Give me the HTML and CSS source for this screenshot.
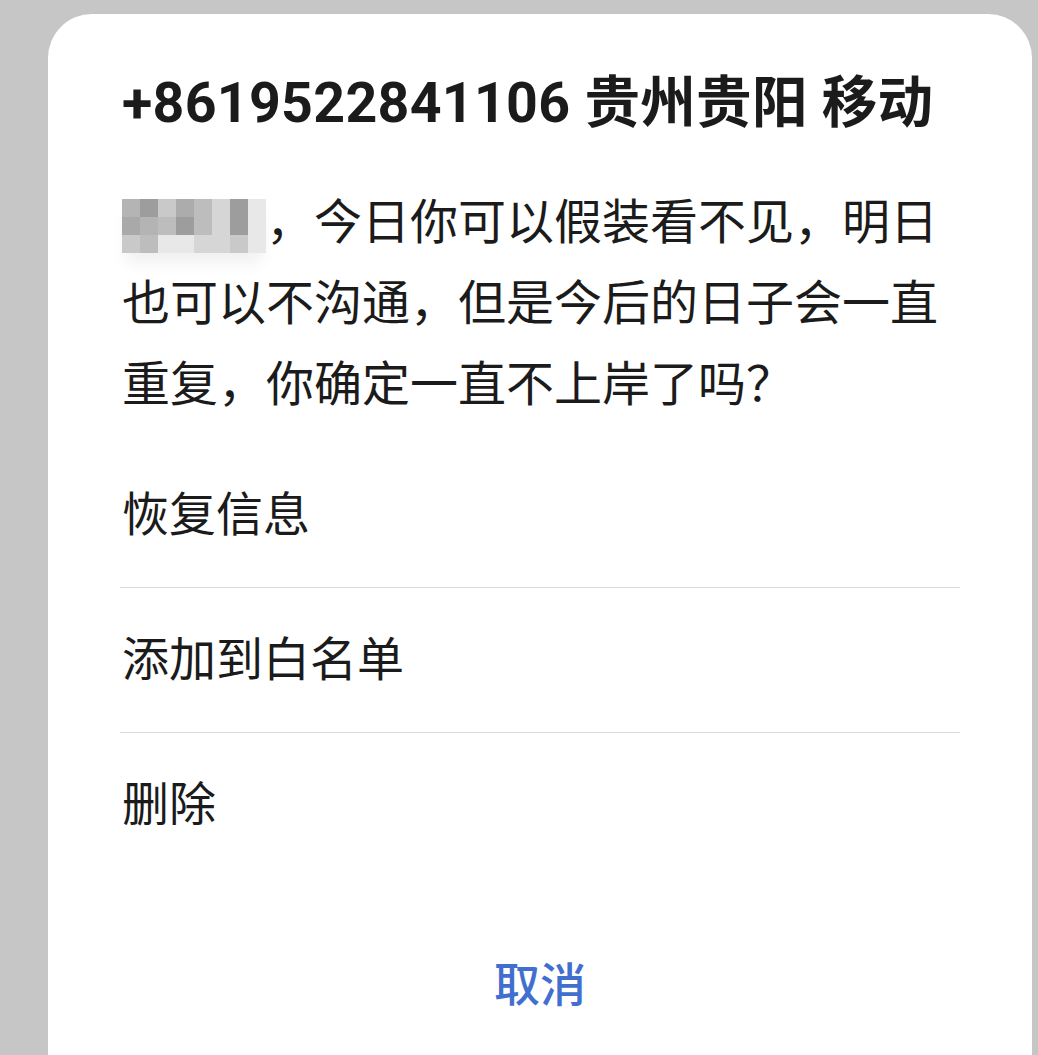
FILE: index.html
```html
<!DOCTYPE HTML>
<html>
    <head>
        <meta name="viewport" content="width=device-width, initial-scale=1.0">
        <title>拦截信息</title>
        <link rel="stylesheet" href="styles.css">
    </head>
    <body>
        <div class="sheet">
            <h1 class="sender">+8619522841106 贵州贵阳 移动</h1>
            <p class="message"><span class="mosaic">
                <i class="c1"></i><i class="c2"></i><i class="c3"></i><i class="c4"></i><i class="c5"></i><i class="c6"></i><i class="c2"></i><i class="c8"></i>
                <i class="c9"></i><i class="c1"></i><i class="c5"></i><i class="c2"></i><i class="c5"></i><i class="c6"></i><i class="c2"></i><i class="c8"></i>
                <i class="c3"></i><i class="c5"></i><i class="c8"></i><i class="c8"></i><i class="c6"></i><i class="c6"></i><i class="c3"></i><i class="c8"></i>
            </span>，今日你可以假装看不见，明日也可以不沟通，但是今后的日子会一直重复，你确定一直不上岸了吗？</p>
            <ul class="actions">
                <li>恢复信息</li>
                <li>添加到白名单</li>
                <li>删除</li>
            </ul>
            <button class="cancel">取消</button>
        </div>
    </body>
</html>
```

FILE: styles.css
```css
html, body{
    margin: 0;
    height: 100%;
}
body{
    background-color: #c6c6c6;
    font-family: Roboto, "Noto Sans CJK SC", sans-serif;
    color: #1b1b1b;
    overflow: hidden;
    padding: 14px 6px 0 48px;
    box-sizing: border-box;
}
.sheet{
    background: #fff;
    border-radius: 44px;
    height: 1100px;
    padding: 58px 72px 0 72px;
    box-sizing: border-box;
}
.sender{
    margin: 0 0 0 2px;
    font-size: 55.5px;
    line-height: 64px;
    font-weight: 700;
    letter-spacing: 0.3px;
    white-space: nowrap;
}
.message{
    margin: 46px 0 0 2px;
    font-size: 48px;
    line-height: 81px;
}
.mosaic{
    display: inline-grid;
    grid-template-columns: repeat(8, 18px);
    grid-auto-rows: 18px;
    width: 144px;
    vertical-align: middle;
    box-shadow: 0 14px 16px -4px #f0f0f0;
}
.mosaic i{
    display: block;
}
.c1{ background: #b4b4b4; }
.c2{ background: #9d9d9d; }
.c3{ background: #c9c9c9; }
.c4{ background: #acacac; }
.c5{ background: #bdbdbd; }
.c6{ background: #d6d6d6; }
.c8{ background: #e8e8e8; }
.c9{ background: #a9a9a9; }
.actions{
    list-style: none;
    margin: 18px 0 0 0;
    padding: 0;
}
.actions li{
    font-size: 47px;
    line-height: 144px;
    padding-left: 2px;
    border-bottom: 1px solid #d9d9d9;
}
.actions li:last-child{
    border-bottom: none;
}
.cancel{
    display: block;
    margin: 68px auto 0 auto;
    background: none;
    border: none;
    padding: 0;
    font-family: Roboto, "Noto Sans CJK SC", sans-serif;
    font-size: 46px;
    line-height: 80px;
    font-weight: 500;
    color: #416fcf;
    cursor: pointer;
}
```
